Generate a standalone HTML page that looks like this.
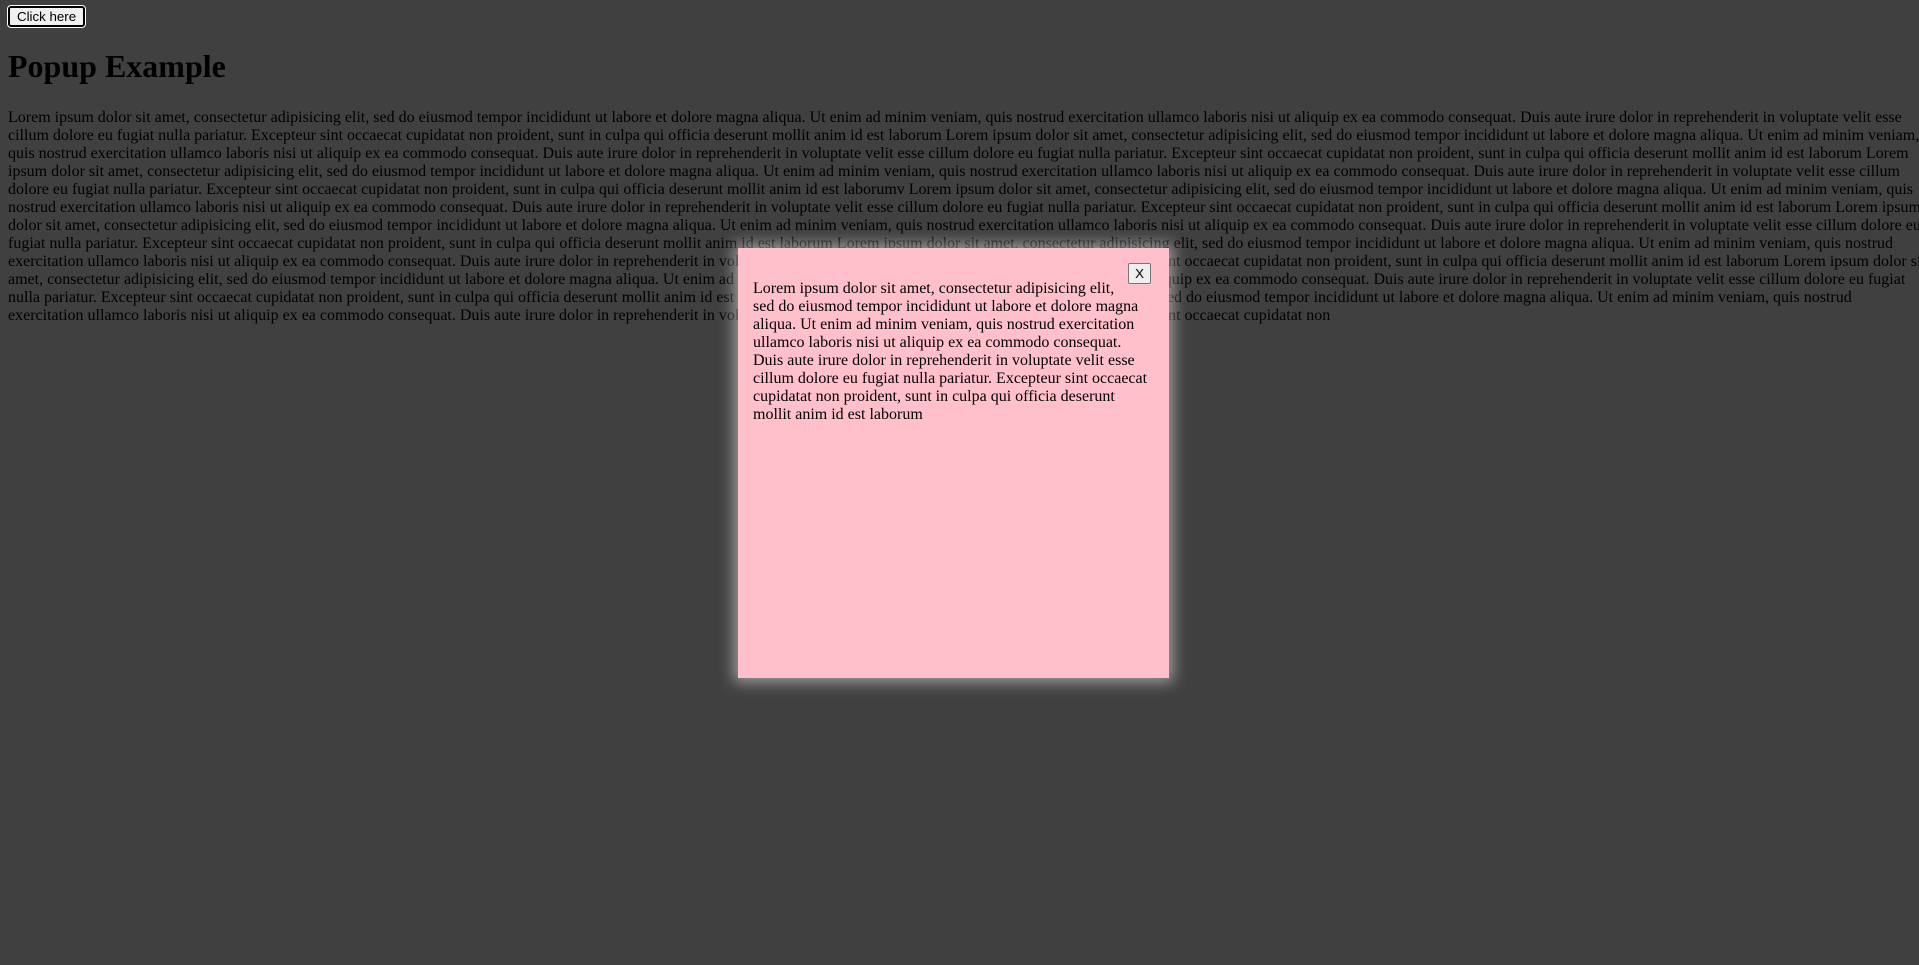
<!DOCTYPE html>
<html><head><meta charset="utf-8"><style>
html,body{margin:0;padding:0;width:1919px;height:965px;overflow:hidden;background:#fff;}
body{font-family:"Liberation Serif",serif;font-size:16px;color:#000;position:relative;}
.wrap{padding:8px;}
button{font-family:"Liberation Sans",sans-serif;font-size:13.3px;}
.btn{position:relative;z-index:5;background:#f0f0f0;border:2px solid #000;outline:1px solid #fff;border-radius:3px;padding:0 7px;height:21px;margin-top:-2px;line-height:17px;}
h1{font-size:32px;margin:21px 0 24px;}
p.main{margin:0 0 16px;line-height:18px;}
p.main span{display:block;white-space:nowrap;}
.ov{position:absolute;left:0;top:0;width:1919px;height:965px;background:rgba(0,0,0,0.75);}
.pop{position:absolute;left:738px;top:248px;width:401px;height:400px;padding:15px;background:pink;box-shadow:0 0 14px 4px rgba(255,255,255,0.5);line-height:18px;}
.pop p{margin:17px 0 0 0;}
.x{float:right;margin-top:-17px;margin-right:3px;background:#efefef;border:1px solid #767676;border-radius:2px;padding:1px 6px;height:21px;font-size:13.3px;}
</style></head><body>
<div class="wrap">
<button class="btn">Click here</button>
<h1>Popup Example</h1>
<p class="main">
<span>Lorem ipsum dolor sit amet, consectetur adipisicing elit, sed do eiusmod tempor incididunt ut labore et dolore magna aliqua. Ut enim ad minim veniam, quis nostrud exercitation ullamco laboris nisi ut aliquip ex ea commodo consequat. Duis aute irure dolor in reprehenderit in voluptate velit esse</span>
<span>cillum dolore eu fugiat nulla pariatur. Excepteur sint occaecat cupidatat non proident, sunt in culpa qui officia deserunt mollit anim id est laborum Lorem ipsum dolor sit amet, consectetur adipisicing elit, sed do eiusmod tempor incididunt ut labore et dolore magna aliqua. Ut enim ad minim veniam,</span>
<span>quis nostrud exercitation ullamco laboris nisi ut aliquip ex ea commodo consequat. Duis aute irure dolor in reprehenderit in voluptate velit esse cillum dolore eu fugiat nulla pariatur. Excepteur sint occaecat cupidatat non proident, sunt in culpa qui officia deserunt mollit anim id est laborum Lorem</span>
<span>ipsum dolor sit amet, consectetur adipisicing elit, sed do eiusmod tempor incididunt ut labore et dolore magna aliqua. Ut enim ad minim veniam, quis nostrud exercitation ullamco laboris nisi ut aliquip ex ea commodo consequat. Duis aute irure dolor in reprehenderit in voluptate velit esse cillum</span>
<span>dolore eu fugiat nulla pariatur. Excepteur sint occaecat cupidatat non proident, sunt in culpa qui officia deserunt mollit anim id est laborumv Lorem ipsum dolor sit amet, consectetur adipisicing elit, sed do eiusmod tempor incididunt ut labore et dolore magna aliqua. Ut enim ad minim veniam, quis</span>
<span>nostrud exercitation ullamco laboris nisi ut aliquip ex ea commodo consequat. Duis aute irure dolor in reprehenderit in voluptate velit esse cillum dolore eu fugiat nulla pariatur. Excepteur sint occaecat cupidatat non proident, sunt in culpa qui officia deserunt mollit anim id est laborum Lorem ipsum</span>
<span>dolor sit amet, consectetur adipisicing elit, sed do eiusmod tempor incididunt ut labore et dolore magna aliqua. Ut enim ad minim veniam, quis nostrud exercitation ullamco laboris nisi ut aliquip ex ea commodo consequat. Duis aute irure dolor in reprehenderit in voluptate velit esse cillum dolore eu</span>
<span>fugiat nulla pariatur. Excepteur sint occaecat cupidatat non proident, sunt in culpa qui officia deserunt mollit anim id est laborum Lorem ipsum dolor sit amet, consectetur adipisicing elit, sed do eiusmod tempor incididunt ut labore et dolore magna aliqua. Ut enim ad minim veniam, quis nostrud</span>
<span>exercitation ullamco laboris nisi ut aliquip ex ea commodo consequat. Duis aute irure dolor in reprehenderit in voluptate velit esse cillum dolore eu fugiat nulla pariatur. Excepteur sint occaecat cupidatat non proident, sunt in culpa qui officia deserunt mollit anim id est laborum Lorem ipsum dolor sit</span>
<span>amet, consectetur adipisicing elit, sed do eiusmod tempor incididunt ut labore et dolore magna aliqua. Ut enim ad minim veniam, quis nostrud exercitation ullamco laboris nisi ut aliquip ex ea commodo consequat. Duis aute irure dolor in reprehenderit in voluptate velit esse cillum dolore eu fugiat</span>
<span>nulla pariatur. Excepteur sint occaecat cupidatat non proident, sunt in culpa qui officia deserunt mollit anim id est laborum Lorem ipsum dolor sit amet, consectetur adipisicing elit, sed do eiusmod tempor incididunt ut labore et dolore magna aliqua. Ut enim ad minim veniam, quis nostrud</span>
<span>exercitation ullamco laboris nisi ut aliquip ex ea commodo consequat. Duis aute irure dolor in reprehenderit in voluptate velit esse cillum dolore eu fugiat nulla pariatur. Excepteur sint occaecat cupidatat non</span>
</p>
</div>
<div class="ov"></div>
<div class="pop"><p><button class="x">X</button>Lorem ipsum dolor sit amet, consectetur adipisicing elit, sed do eiusmod tempor incididunt ut labore et dolore magna aliqua. Ut enim ad minim veniam, quis nostrud exercitation ullamco laboris nisi ut aliquip ex ea commodo consequat. Duis aute irure dolor in reprehenderit in voluptate velit esse cillum dolore eu fugiat nulla pariatur. Excepteur sint occaecat cupidatat non proident, sunt in culpa qui officia deserunt mollit anim id est laborum</p></div>
</body></html>
